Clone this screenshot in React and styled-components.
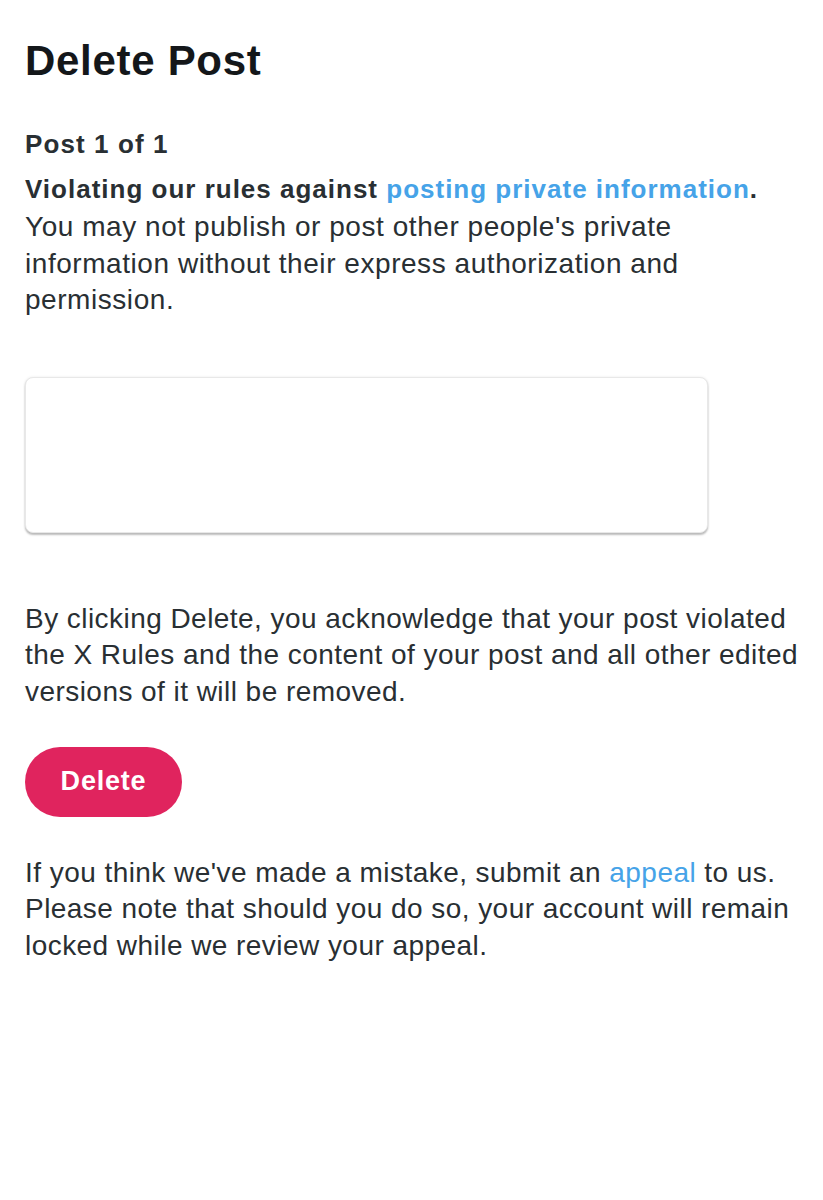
import React from "react";
import styled, { createGlobalStyle } from "styled-components";

const GlobalStyle = createGlobalStyle`
  html, body {
    margin: 0;
    padding: 0;
    background: #ffffff;
  }
  body {
    font-family: "Liberation Sans", Arial, sans-serif;
    color: #292f33;
  }
`;

const Page = styled.div`
  padding: 36px 25px 0 25px;
  display: flex;
  flex-direction: column;
`;

const Title = styled.h1`
  margin: 0;
  font-size: 42px;
  line-height: 50px;
  letter-spacing: 0.7px;
  font-weight: 700;
  color: #14171a;
`;

const Counter = styled.h2`
  margin: 42px 0 0 0;
  font-size: 26px;
  line-height: 32px;
  letter-spacing: 1.1px;
  font-weight: 700;
  color: #292f33;
`;

const Section = styled.div`
  margin-top: ${(p) => p.$top || 0}px;
`;

const Lead = styled.div`
  font-size: 26px;
  line-height: 40px;
  font-weight: 700;
  letter-spacing: 1px;
  white-space: nowrap;
  color: #292f33;
`;

const Text = styled.p`
  margin: ${(p) => p.$top || 0}px 0 0 0;
  font-size: 28px;
  line-height: 36.5px;
  letter-spacing: ${(p) => (p.$tight ? 0.45 : 0.55)}px;
  white-space: nowrap;
  color: #292f33;
`;

const Link = styled.a`
  color: #46a3e8;
  text-decoration: none;
`;

const TextBox = styled.div`
  margin-top: 58px;
  width: 683px;
  height: 156px;
  box-sizing: border-box;
  border-radius: 8px;
  background: #ffffff;
  border: 1px solid #e8e8e8;
  box-shadow: 0 2px 2px rgba(0, 0, 0, 0.25), 0 0 3px rgba(0, 0, 0, 0.08);
`;

const DeleteButton = styled.button`
  margin-top: 36.5px;
  align-self: flex-start;
  width: 157px;
  height: 70px;
  padding: 0;
  border: none;
  border-radius: 35px;
  background: #e0245e;
  color: #ffffff;
  font-family: "Liberation Sans", Arial, sans-serif;
  font-size: 27px;
  letter-spacing: 0.8px;
  font-weight: 700;
  cursor: pointer;
`;

export default function App() {
  return (
    <>
      <GlobalStyle />
      <Page>
        <Title>Delete Post</Title>
        <Counter>Post 1 of 1</Counter>
        <Section $top={9}>
          <Lead>
            Violating our rules against{" "}
            <Link href="#">posting private information</Link>.
          </Lead>
          <Text>
            You may not publish or post other people's private
            <br />
            information without their express authorization and
            <br />
            permission.
          </Text>
        </Section>
        <TextBox />
        <Text $top={68} $tight>
          By clicking Delete, you acknowledge that your post violated
          <br />
          the X Rules and the content of your post and all other edited
          <br />
          versions of it will be removed.
        </Text>
        <DeleteButton>Delete</DeleteButton>
        <Text $top={38} $tight>
          If you think we've made a mistake, submit an{" "}
          <Link href="#">appeal</Link> to us.
          <br />
          Please note that should you do so, your account will remain
          <br />
          locked while we review your appeal.
        </Text>
      </Page>
    </>
  );
}
